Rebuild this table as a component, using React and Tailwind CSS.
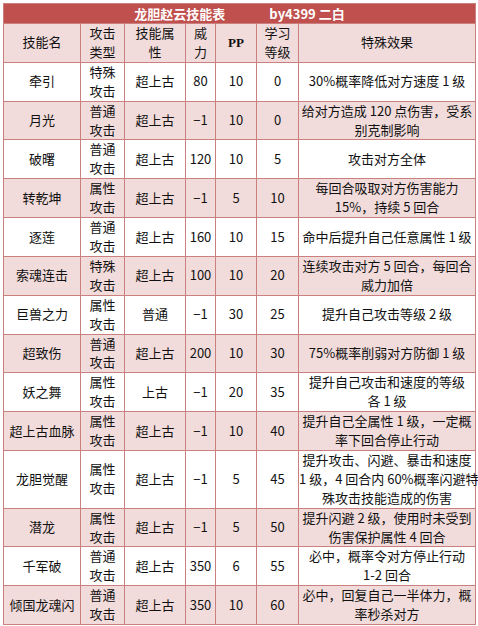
import React from "react";

const rows = [
  ["牵引", ["特殊", "攻击"], "超上古", "80", "10", "0", ["30%概率降低对方速度 1 级"]],
  ["月光", ["普通", "攻击"], "超上古", "−1", "10", "0", ["给对方造成 120 点伤害，受系", "别克制影响"]],
  ["破曙", ["普通", "攻击"], "超上古", "120", "10", "5", ["攻击对方全体"]],
  ["转乾坤", ["属性", "攻击"], "超上古", "−1", "5", "10", ["每回合吸取对方伤害能力", "15%，持续 5 回合"]],
  ["逐莲", ["普通", "攻击"], "超上古", "160", "10", "15", ["命中后提升自己任意属性 1 级"]],
  ["索魂连击", ["特殊", "攻击"], "超上古", "100", "10", "20", ["连续攻击对方 5 回合，每回合", "威力加倍"]],
  ["巨兽之力", ["属性", "攻击"], "普通", "−1", "30", "25", ["提升自己攻击等级 2 级"]],
  ["超致伤", ["普通", "攻击"], "超上古", "200", "10", "30", ["75%概率削弱对方防御 1 级"]],
  ["妖之舞", ["属性", "攻击"], "上古", "−1", "20", "35", ["提升自己攻击和速度的等级", "各 1 级"]],
  ["超上古血脉", ["属性", "攻击"], "超上古", "−1", "10", "40", ["提升自己全属性 1 级，一定概", "率下回合停止行动"]],
  ["龙胆觉醒", ["属性", "攻击"], "超上古", "−1", "5", "45", ["提升攻击、闪避、暴击和速度", "1 级，4 回合内 60%概率闪避特", "殊攻击技能造成的伤害"]],
  ["潜龙", ["属性", "攻击"], "超上古", "−1", "5", "50", ["提升闪避 2 级，使用时未受到", "伤害保护属性 4 回合"]],
  ["千军破", ["普通", "攻击"], "超上古", "350", "6", "55", ["必中，概率令对方停止行动", "1-2 回合"]],
  ["倾国龙魂闪", ["普通", "攻击"], "超上古", "350", "10", "60", ["必中，回复自己一半体力，概", "率秒杀对方"]],
];

function Lines({ lines }) {
  return lines.map((l, i) => (
    <div key={i} className="whitespace-nowrap">
      {l}
    </div>
  ));
}

const cell = "border border-[#c9807e] p-0 text-center align-middle";

export default function App() {
  return (
    <div className="bg-white w-[478px] h-[626px] pl-[3px] pt-[3px]" style={{ fontFamily: '"Noto Sans CJK SC", sans-serif' }}>
      <table className="border-collapse table-fixed w-[472px] text-[13px] leading-[18.9px] text-[#111]">
        <colgroup>
          <col className="w-[77px]" />
          <col className="w-[44px]" />
          <col className="w-[61px]" />
          <col className="w-[30px]" />
          <col className="w-[41px]" />
          <col className="w-[42px]" />
          <col className="w-[177px]" />
        </colgroup>
        <tbody>
          <tr className="bg-[#c0504d] h-[20px]">
            <td colSpan={7} className="border border-[#c9807e] p-0 text-center text-white font-bold text-[13px] leading-[18px]">
              <span>龙胆赵云技能表</span>
              <span className="ml-[44px]">by4399 二白</span>
            </td>
          </tr>
          <tr className="bg-[#f2dcdb]">
            <td className={cell}>技能名</td>
            <td className={cell}><Lines lines={["攻击", "类型"]} /></td>
            <td className={cell}><Lines lines={["技能属", "性"]} /></td>
            <td className={cell}><Lines lines={["威", "力"]} /></td>
            <td className={cell}>
              <span className="font-bold text-[13px]" style={{ fontFamily: '"Liberation Serif", serif' }}>PP</span>
            </td>
            <td className={cell}><Lines lines={["学习", "等级"]} /></td>
            <td className={cell}>特殊效果</td>
          </tr>
          {rows.map((r, i) => (
            <tr key={i} className={i % 2 === 0 ? "bg-white" : "bg-[#f2dcdb]"}>
              <td className={cell}>{r[0]}</td>
              <td className={cell}><Lines lines={r[1]} /></td>
              <td className={cell}>{r[2]}</td>
              <td className={cell}>{r[3]}</td>
              <td className={cell}>{r[4]}</td>
              <td className={cell}>{r[5]}</td>
              <td className={cell}><Lines lines={r[6]} /></td>
            </tr>
          ))}
        </tbody>
      </table>
    </div>
  );
}
